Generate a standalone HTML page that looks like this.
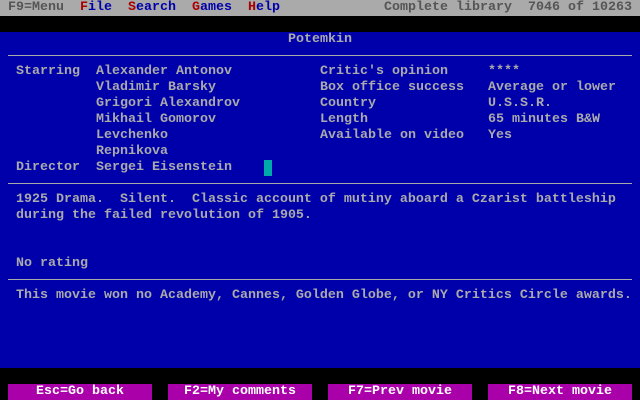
<!DOCTYPE html>
<html><head><meta charset="utf-8"><style>
html,body{margin:0;padding:0;background:#000;}
#s{position:relative;width:640px;height:400px;overflow:hidden;background:#000;font-family:"Liberation Mono","DejaVu Sans Mono",monospace;font-size:13.33px;line-height:16px;color:#aaa;font-weight:bold;}
.t{position:absolute;white-space:pre;height:16px;line-height:16px;}
.hl{position:absolute;left:8px;width:624px;height:1px;background:#aaa;}
.b{position:absolute;top:384px;width:144px;height:16px;background:#aa00aa;color:#fff;text-align:center;}
</style></head><body><div id="s">
<div style="position:absolute;left:0;top:0;width:640px;height:16px;background:#aaa"></div>
<div style="position:absolute;left:0;top:32px;width:640px;height:336px;background:#0000aa"></div>
<div class="t" style="top:0;left:8px;color:#555">F9=Menu</div>
<div class="t" style="top:0;left:80px;color:#0000aa"><span style="color:#aa0000">F</span>ile</div>
<div class="t" style="top:0;left:128px;color:#0000aa"><span style="color:#aa0000">S</span>earch</div>
<div class="t" style="top:0;left:192px;color:#0000aa"><span style="color:#aa0000">G</span>ames</div>
<div class="t" style="top:0;left:248px;color:#0000aa"><span style="color:#aa0000">H</span>elp</div>
<div class="t" style="top:0;left:384px;color:#555">Complete library  7046 of 10263</div>
<div class="t" style="top:32px;left:288px;">Potemkin</div>
<div class="hl" style="top:55px"></div>
<div class="t" style="top:64px;left:16px">Starring</div>
<div class="t" style="top:64px;left:96px">Alexander Antonov
Vladimir Barsky
Grigori Alexandrov
Mikhail Gomorov
Levchenko
Repnikova
Sergei Eisenstein</div>
<div class="t" style="top:160px;left:16px">Director</div>
<div style="position:absolute;left:264px;top:160px;width:8px;height:16px;background:#00aaaa"></div>
<div class="t" style="top:64px;left:320px">Critic's opinion
Box office success
Country
Length
Available on video</div>
<div class="t" style="top:64px;left:488px">****
Average or lower
U.S.S.R.
65 minutes B&amp;W
Yes</div>
<div class="hl" style="top:183px"></div>
<div class="t" style="top:192px;left:16px">1925 Drama.  Silent.  Classic account of mutiny aboard a Czarist battleship
during the failed revolution of 1905.</div>
<div class="t" style="top:256px;left:16px">No rating</div>
<div class="hl" style="top:279px"></div>
<div class="t" style="top:288px;left:16px">This movie won no Academy, Cannes, Golden Globe, or NY Critics Circle awards.</div>
<div class="b" style="left:8px">Esc=Go back</div>
<div class="b" style="left:168px">F2=My comments</div>
<div class="b" style="left:328px">F7=Prev movie</div>
<div class="b" style="left:488px">F8=Next movie</div>
</div></body></html>
